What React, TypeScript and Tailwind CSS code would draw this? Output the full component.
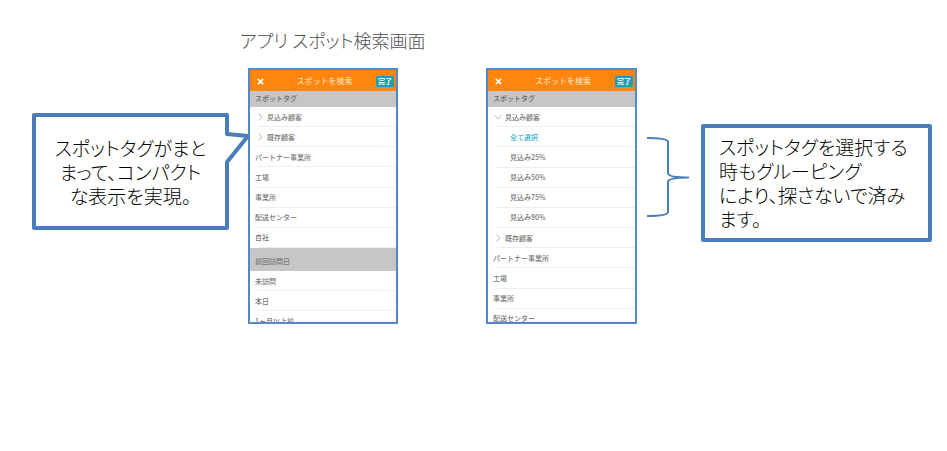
import type { ReactNode } from "react";

type Row = { label: string; kind?: "closed" | "open" | "child" | "all" };

const tagRows: Row[] = [
  { label: "見込み顧客", kind: "closed" },
  { label: "既存顧客", kind: "closed" },
  { label: "パートナー事業所" },
  { label: "工場" },
  { label: "事業所" },
  { label: "配送センター" },
  { label: "自社" },
];

const visitRows: Row[] = [{ label: "未訪問" }, { label: "本日" }, { label: "1ヶ月以上前" }];

const expandedRows: Row[] = [
  { label: "見込み顧客", kind: "open" },
  { label: "全て選択", kind: "all" },
  { label: "見込み25%", kind: "child" },
  { label: "見込み50%", kind: "child" },
  { label: "見込み75%", kind: "child" },
  { label: "見込み90%", kind: "child" },
  { label: "既存顧客", kind: "closed" },
  { label: "パートナー事業所" },
  { label: "工場" },
  { label: "事業所" },
  { label: "配送センター" },
];

function Chevron({ open }: { open: boolean }) {
  return (
    <svg viewBox="0 0 8 8" className="h-2 w-2 shrink-0" fill="none" stroke="#a3a3a3" strokeWidth="0.8" aria-hidden="true">
      <path d={open ? "M0.5 2.2 4 6 7.5 2.2" : "M2.5 0.5 5.8 4 2.5 7.5"} />
    </svg>
  );
}

function List({ rows, className }: { rows: Row[]; className: string }) {
  return (
    <ul className={`grid shrink-0 auto-rows-fr ${className}`}>
      {rows.map(({ label, kind }) => {
        const group = kind === "closed" || kind === "open";
        const nested = kind === "child" || kind === "all";
        return (
          <li key={label} className="flex">
            <button
              type="button"
              aria-expanded={group ? kind === "open" : undefined}
              className={`flex flex-1 items-center gap-[3px] ${group ? "pl-1.5" : nested ? "pl-[22px]" : "pl-[5px]"} bg-[linear-gradient(#eeeeee,#eeeeee)] bg-[length:calc(100%-8px)_1px] bg-[position:right_bottom] bg-no-repeat text-left text-[7px] leading-none font-medium whitespace-nowrap ${kind === "all" ? "text-[#35b0cc]" : "text-[#777777]"}`}
            >
              {group && <Chevron open={kind === "open"} />}
              {label}
            </button>
          </li>
        );
      })}
    </ul>
  );
}

function Phone({ className, children }: { className: string; children: ReactNode }) {
  return (
    <section className={`flex h-64 shrink-0 flex-col overflow-hidden border-2 border-[#5588c9] bg-white ${className}`}>
      <header className="flex h-[21px] shrink-0 items-center justify-between bg-[#ff850f] pr-0.5 pl-[7px] leading-none text-[#ffe9cf]">
        <button type="button" aria-label="閉じる" className="flex w-4 items-center text-white">
          <svg viewBox="0 0 8 8" className="mt-0.5 h-[7px] w-[7px]" stroke="currentColor" strokeWidth="1.8" aria-hidden="true">
            <path d="M1 1 7 7M7 1 1 7" />
          </svg>
        </button>
        <h2 className="text-[8px]">スポットを検索</h2>
        <button type="button" className="mt-0.5 h-[11px] w-[18px] rounded-xs bg-[#1a9fb4] text-center text-[7px] leading-none font-bold text-white">
          完了
        </button>
      </header>
      <h3 className="h-4 shrink-0 bg-[#c6c6c6] pl-[5px] text-[7px] leading-[14px] font-medium text-[#666666]">スポットタグ</h3>
      {children}
    </section>
  );
}

export default function App() {
  return (
    <main className="bg-white pt-7 pb-8 font-['Noto_Sans_CJK_JP',sans-serif]">
      <h1 className="pl-60 text-lg leading-6 font-light text-[#505050] [font-feature-settings:'palt']">
        アプリ スポット検索画面
      </h1>
      <div className="mt-4 flex items-start pr-[15px] pl-8">
        <aside className="relative z-10 mt-[45px] flex h-[117px] w-[197px] shrink-0 items-center justify-center rounded-xs border-4 border-[#4a7ebb] bg-white text-center text-[19px] leading-6 font-light text-black [font-feature-settings:'palt']">
          <p>
            スポットタグがまと
            <br />
            まって、コンパクト
            <br />
            な表示を実現。
          </p>
          <svg viewBox="0 0 32 36" className="absolute top-3 -right-[27px] h-9 w-8" fill="none" aria-hidden="true">
            <path d="M1 5H7L28 7 7 33H1Z" fill="white" />
            <path d="M7 2V5L28 7 7 33V36" stroke="#4a7ebb" strokeWidth="4" strokeLinejoin="round" />
          </svg>
        </aside>

        <Phone className="ml-[19px] w-[150px]">
          <List rows={tagRows} className="h-[141px]" />
          <h3 className="h-[23px] shrink-0 bg-[#c6c6c6] pl-[5px] text-[7px] leading-[27px] font-medium text-[#777777]">前回訪問日</h3>
          <List rows={visitRows} className="h-[60px]" />
        </Phone>

        <Phone className="ml-[88px] w-[151px]">
          <List rows={expandedRows} className="h-[222px]" />
        </Phone>

        <svg viewBox="0 0 42 80" className="mt-[69px] ml-[10px] h-20 w-[42px] shrink-0" fill="none" stroke="#4a7ebb" strokeWidth="2" aria-hidden="true">
          <path d="M0 1C13 1 21 2 21 5V36C21 39 29 40.500 42 40.500C29 40.500 21 42 21 45V75C21 78 13 79 0 79" />
        </svg>

        <aside className="mt-14 ml-3 flex h-[118px] min-w-[231px] flex-1 items-center rounded-xs border-4 border-[#4a7ebb] bg-white pl-3.5 text-[19px] leading-6 font-light text-black [font-feature-settings:'palt']">
          <p className="whitespace-nowrap">
            スポットタグを選択する
            <br />
            時もグルーピング
            <br />
            により、探さないで済み
            <br />
            ます。
          </p>
        </aside>
      </div>
    </main>
  );
}
